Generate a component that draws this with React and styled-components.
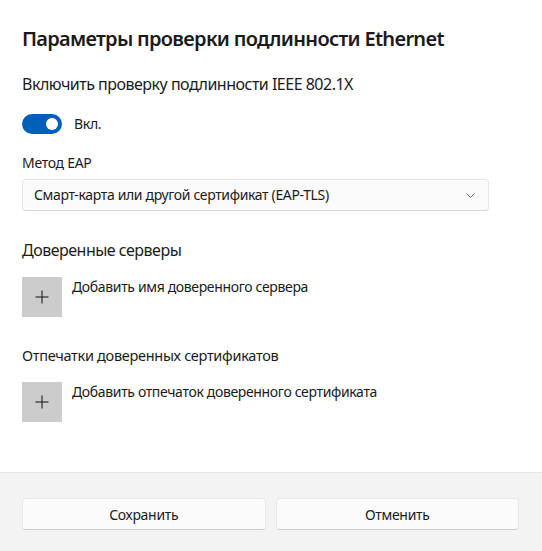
import React from "react";
import styled, { createGlobalStyle } from "styled-components";

const Global = createGlobalStyle`
  html, body { margin: 0; padding: 0; background: #ffffff; }
  body {
    font-family: "Noto Sans", "Open Sans", sans-serif;
    color: #1b1b1b;
    -webkit-font-smoothing: antialiased;
  }
`;

const Window = styled.div`
  width: 542px;
  height: 551px;
  display: flex;
  flex-direction: column;
  background: #ffffff;
  overflow: hidden;
`;

const Content = styled.div`
  flex: 1;
  display: flex;
  flex-direction: column;
  padding: 25px 53px 0 22px;
`;

const Title = styled.h1`
  margin: 0;
  font-size: 20px;
  line-height: 28px;
  font-weight: 600;
  letter-spacing: -0.7px;
  color: #1a1a1a;
`;

const Label = styled.div`
  font-size: 14px;
  line-height: 20px;
  letter-spacing: -0.3px;
  margin-top: ${(p) => p.$mt || 0}px;
`;

const Heading = styled.h2`
  margin: ${(p) => p.$mt || 0}px 0 0;
  font-size: ${(p) => (p.$small ? 14.5 : 16)}px;
  line-height: 22px;
  font-weight: 400;
  letter-spacing: ${(p) => (p.$small ? -0.3 : -0.5)}px;
`;

const ToggleRow = styled.div`
  display: flex;
  align-items: center;
  gap: 12px;
  margin-top: 19px;
  font-size: 14px;
  line-height: 20px;
  letter-spacing: -0.3px;
`;

const Track = styled.div`
  width: 40px;
  height: 20px;
  border-radius: 10px;
  background: #005fb8;
  display: flex;
  align-items: center;
  justify-content: flex-end;
  padding-right: 4px;
  box-sizing: border-box;
`;

const Knob = styled.div`
  width: 12px;
  height: 12px;
  border-radius: 50%;
  background: #ffffff;
`;

const Select = styled.div`
  margin-top: 6px;
  height: 32px;
  box-sizing: border-box;
  border: 1px solid #e5e5e5;
  border-bottom-color: #d6d6d6;
  border-radius: 4px;
  background: #fbfbfb;
  display: flex;
  align-items: center;
  justify-content: space-between;
  padding: 0 13px 0 11px;
  font-size: 14px;
  line-height: 20px;
  letter-spacing: -0.35px;
`;

const AddRow = styled.div`
  display: flex;
  align-items: flex-start;
  gap: 10px;
  margin-top: 16px;
  font-size: 14px;
  line-height: 20px;
  letter-spacing: -0.35px;
`;

const PlusBox = styled.div`
  width: 40px;
  height: 40px;
  flex: none;
  background: #cccccc;
  display: flex;
  align-items: center;
  justify-content: center;
`;

const Footer = styled.div`
  height: 79px;
  box-sizing: border-box;
  background: #f3f3f3;
  border-top: 1px solid #e5e5e5;
  padding: 25px 23px 0 22px;
  display: grid;
  grid-template-columns: 1fr 1fr;
  column-gap: 10px;
  align-items: start;
`;

const Button = styled.button`
  height: 32px;
  box-sizing: border-box;
  border: 1px solid #e8e8e8;
  border-bottom-color: #cdcdcd;
  border-radius: 4px;
  background: #fbfbfb;
  font-family: inherit;
  font-size: 14px;
  letter-spacing: -0.3px;
  color: #1b1b1b;
  padding: 0;
`;

const Plus = () => (
  <svg width="14" height="14" viewBox="0 0 14 14">
    <path d="M7 0.5V13.5M0.5 7H13.5" stroke="#111111" strokeWidth="1" fill="none" />
  </svg>
);

const Chevron = () => (
  <svg width="9" height="5" viewBox="0 0 9 5">
    <path d="M0.5 0.5L4.5 4.5L8.5 0.5" stroke="#6b6b6b" strokeWidth="1" fill="none" />
  </svg>
);

export default function App() {
  return (
    <>
      <Global />
      <Window>
        <Content>
          <Title>Параметры проверки подлинности Ethernet</Title>
          <Heading $mt={20}>Включить проверку подлинности IEEE 802.1X</Heading>
          <ToggleRow>
            <Track>
              <Knob />
            </Track>
            <span>Вкл.</span>
          </ToggleRow>
          <Label $mt={19}>Метод EAP</Label>
          <Select>
            <span>Смарт-карта или другой сертификат (EAP-TLS)</span>
            <Chevron />
          </Select>
          <Heading $mt={28}>Доверенные серверы</Heading>
          <AddRow>
            <PlusBox>
              <Plus />
            </PlusBox>
            <span>Добавить имя доверенного сервера</span>
          </AddRow>
          <Heading $mt={27} $small>Отпечатки доверенных сертификатов</Heading>
          <AddRow>
            <PlusBox>
              <Plus />
            </PlusBox>
            <span>Добавить отпечаток доверенного сертификата</span>
          </AddRow>
        </Content>
        <Footer>
          <Button>Сохранить</Button>
          <Button>Отменить</Button>
        </Footer>
      </Window>
    </>
  );
}
